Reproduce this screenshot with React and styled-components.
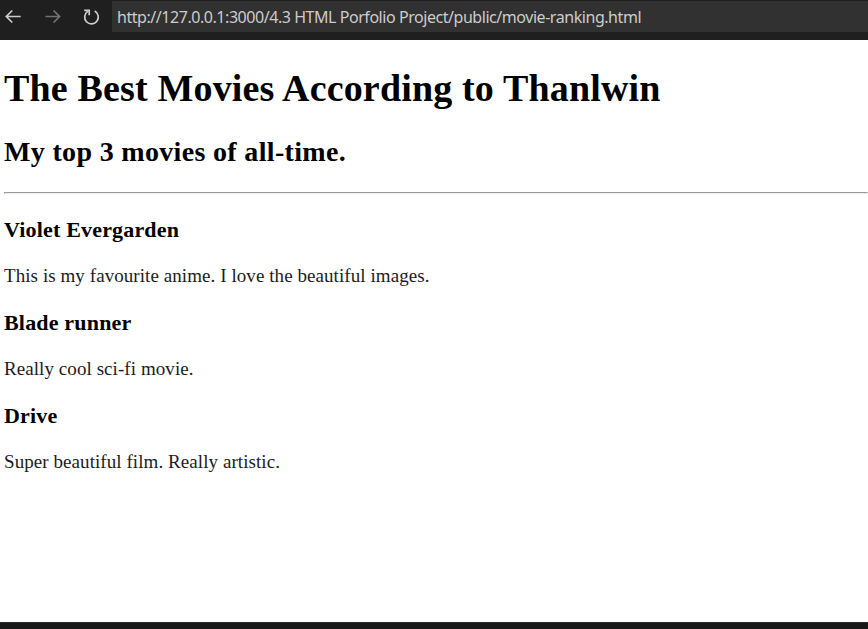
import React from "react";
import styled, { createGlobalStyle } from "styled-components";

const GlobalStyle = createGlobalStyle`
  * { box-sizing: border-box; }
  body { margin: 0; overflow: hidden; background: #fff; }
`;
const Window = styled.div`
  display: flex;
  flex-direction: column;
  height: 629px;
`;
const Toolbar = styled.header`
  display: flex;
  flex: none;
  height: 40px;
  padding-top: 1px;
  background: #1f1f1f;
`;
const NavButtons = styled.nav`
  display: flex;
  gap: 23.5px;
  width: 112px;
  height: 31px;
  padding-left: 5px;
`;
const NavButton = styled.button`
  display: flex;
  flex: none;
  align-items: center;
  padding: 0;
  width: 16px;
  border: 0;
  background: none;
  color: ${(p) => (p.$dim ? "#727272" : "#cccccc")};
`;
const Address = styled.div`
  flex: 1;
  height: 31px;
  padding-left: 5px;
  background: #313131;
  color: #cccccc;
  font: 16px/32px "Noto Sans", sans-serif;
  letter-spacing: -0.45px;
  white-space: nowrap;
`;
const Page = styled.main`
  flex: 1;
  padding-left: 4px;
  background: #fff;
  color: #000;
  font-family: "Liberation Serif", serif;
`;
const Title = styled.h1`
  margin: 26px 0 0;
  font-size: 38px;
  line-height: 44px;
  letter-spacing: 0.16px;
  white-space: nowrap;
`;
const Subtitle = styled.h2`
  margin: 25px 0 0;
  font-size: 28px;
  line-height: 34px;
  letter-spacing: 0.33px;
`;
const Rule = styled.hr`
  margin: 23px 0 0;
  height: 2px;
  border: 1px solid;
  border-color: #9a9a9a #eee #eee #9a9a9a;
`;
const Movie = styled.section`
  height: 93px;
  padding-top: 23px;
`;
const MovieName = styled.h3`
  margin: 0;
  font-size: 22px;
  line-height: 26px;
  letter-spacing: 0.18px;
`;
const Description = styled.p`
  margin: 21px 0 0;
  font-size: 19px;
  line-height: 24px;
  letter-spacing: 0.07px;
  color: #1c1c1c;
`;
const StatusBar = styled.footer`
  flex: none;
  height: 7px;
  border-top: 1px solid #2b2b2b;
  background: #181818;
`;
const movies = [
  ["Violet Evergarden", "This is my favourite anime. I love the beautiful images."],
  ["Blade runner", "Really cool sci-fi movie."],
  ["Drive", "Super beautiful film. Really artistic."],
];
const Icon = ({ children }) => (
  <svg width="16" height="16" viewBox="0 0 16 16" fill="none" stroke="currentColor" strokeWidth="1.7" overflow="visible">{children}</svg>
);

export default function App() {
  return (
    <Window>
      <GlobalStyle />
      <Toolbar>
        <NavButtons>
          <NavButton aria-label="Back"><Icon><path d="M15.7 7.5H1.3M7.3 1.5l-6 6 6 6" /></Icon></NavButton>
          <NavButton aria-label="Forward" $dim><Icon><path d="M.5 7.5h14M8.6 1.5l6 6-6 6" /></Icon></NavButton>
          <NavButton aria-label="Reload"><Icon><path d="M10.7 2.1a6.8 6.8 0 1 1-6.9.3M.2 1.3h5v5" /></Icon></NavButton>
        </NavButtons>
        <Address>http://127.0.0.1:3000/4.3 HTML Porfolio Project/public/movie-ranking.html</Address>
      </Toolbar>
      <Page>
        <Title>The Best Movies According to Thanlwin</Title>
        <Subtitle>My top 3 movies of all-time.</Subtitle>
        <Rule />
        {movies.map(([name, text]) => (
          <Movie key={name}>
            <MovieName>{name}</MovieName>
            <Description>{text}</Description>
          </Movie>
        ))}
      </Page>
      <StatusBar />
    </Window>
  );
}
